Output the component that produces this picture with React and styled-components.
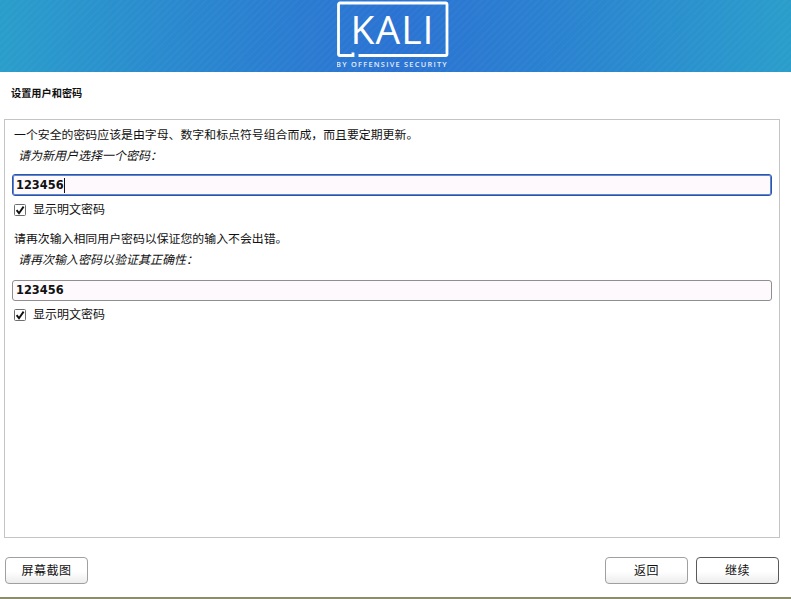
import React from "react";
import styled, { createGlobalStyle } from "styled-components";

const Global = createGlobalStyle`
  html, body { margin: 0; padding: 0; background: #fff; }
  body { font-family: "DejaVu Sans", "Noto Sans CJK SC", sans-serif; color: #111; }
`;
const CJK = `"DejaVu Sans", "Noto Sans CJK SC", sans-serif`;

const Page = styled.div`
  width: 791px; height: 599px; display: flex; flex-direction: column; overflow: hidden; box-sizing: border-box;
  border-bottom: 2px solid #8b8d6c;
`;
const Banner = styled.header`
  height: 72px; flex: none; display: flex; justify-content: center;
  background: repeating-linear-gradient(135deg, rgba(255,255,255,.025) 0 2px, rgba(255,255,255,0) 2px 5px),
    linear-gradient(90deg, #2a9ecb 0%, #2a86cf 25%, #2b73d3 50%, #2a86cf 75%, #2a9ecb 100%);
`;
const Logo = styled.svg`
  width: 118px; height: 72px; display: block;
`;
const Title = styled.h1`
  margin: 0; padding: 15px 0 0 11px; height: 33px; box-sizing: border-box; flex: none;
  font: bold 10.2px/14px ${CJK};
`;
const Panel = styled.main`
  margin: 14px 11px 0 4px; height: 419px; flex: none; box-sizing: border-box;
  border: 1px solid #c4c4c4; padding: 7px 7px 0 8px;
  display: flex; flex-direction: column;
`;
const Note = styled.p`
  margin: ${p => p.$top || 0}px 0 0 1px; font: 11.9px/16px ${CJK};
`;
const Prompt = styled.label`
  display: block; margin: 5px 0 0 5px; font: italic 12px/16px ${CJK};
`;
const Field = styled.div`
  margin-top: ${p => p.$focus ? 10 : 12}px; height: ${p => p.$focus ? 22 : 21}px; box-sizing: border-box;
  margin-left: -1px;
  border: 1px solid ${p => p.$focus ? "#2a55a8" : "#8f8f8f"};
  box-shadow: ${p => p.$focus ? "inset 0 0 0 1px #5c86d0" : "none"};
  border-radius: 3px; background: #fdf9fc; padding: 0 3px;
  display: flex; align-items: center;
  font: bold 11.4px/19px "DejaVu Sans", sans-serif;
`;
const Caret = styled.span`
  width: 1px; height: 15px; background: #111;
`;
const Check = styled.div`
  margin: 6px 0 0 1px; display: flex; align-items: center; gap: 7px; height: 16px;
  font: 12px/16px ${CJK};
`;
const Box = styled.svg`
  width: 12px; height: 12px; display: block; flex: none;
`;
const Footer = styled.footer`
  flex: 1; display: flex; align-items: flex-start; padding: 19px 12px 0 5px; gap: 8px;
`;
const Button = styled.button`
  width: 83px; height: 27px; box-sizing: border-box; padding: 0; cursor: default;
  border: 1px solid ${p => p.$primary ? "#5a5a5a" : "#a0a0a0"}; border-radius: 4px;
  background: linear-gradient(180deg, #fff 0%, #fff 55%, #ececec 100%);
  font: 12px/16px ${CJK}; letter-spacing: .5px; color: #111;
`;
const Spacer = styled.div` flex: 1; `;

const Tick = () => (
  <Box viewBox="0 0 12 12">
    <rect x=".5" y=".5" width="11" height="11" rx="1" fill="#fff" stroke="#6e6e6e" />
    <path d="M2.6 6.2 5 9.2 9.6 2.6" fill="none" stroke="#111" strokeWidth="1.9" />
  </Box>
);

export default function App() {
  return (
    <Page>
      <Global />
      <Banner>
        <Logo viewBox="0 0 118 72">
          <path d="M16 52.5V55.5H3a1.5 1.5 0 0 1-1.5-1.5V4.5A1.5 1.5 0 0 1 3 3h105.5a1.5 1.5 0 0 1 1.5 1.5V54a1.5 1.5 0 0 1-1.5 1.5H21.5"
            fill="none" stroke="#fff" strokeWidth="2.8" />
          <text x="55.5" y="44" textAnchor="middle" fill="#fff" fontFamily="'Open Sans', sans-serif" fontSize="39" fontWeight="500" letterSpacing="1">KALI</text>
          <text x="55" y="67" textAnchor="middle" fill="#e4ecf8" fontFamily="'Open Sans', sans-serif" fontSize="7.4" fontWeight="600" letterSpacing="1.25">BY OFFENSIVE SECURITY</text>
        </Logo>
      </Banner>
      <Title>设置用户和密码</Title>
      <Panel>
        <Note>一个安全的密码应该是由字母、数字和标点符号组合而成&#xFF0C;而且要定期更新。</Note>
        <Prompt>请为新用户选择一个密码&#xFF1A;</Prompt>
        <Field $focus>123456<Caret /></Field>
        <Check><Tick />显示明文密码</Check>
        <Note $top={13}>请再次输入相同用户密码以保证您的输入不会出错。</Note>
        <Prompt>请再次输入密码以验证其正确性&#xFF1A;</Prompt>
        <Field>123456</Field>
        <Check><Tick />显示明文密码</Check>
      </Panel>
      <Footer>
        <Button>屏幕截图</Button>
        <Spacer />
        <Button>返回</Button>
        <Button $primary>继续</Button>
      </Footer>
    </Page>
  );
}
